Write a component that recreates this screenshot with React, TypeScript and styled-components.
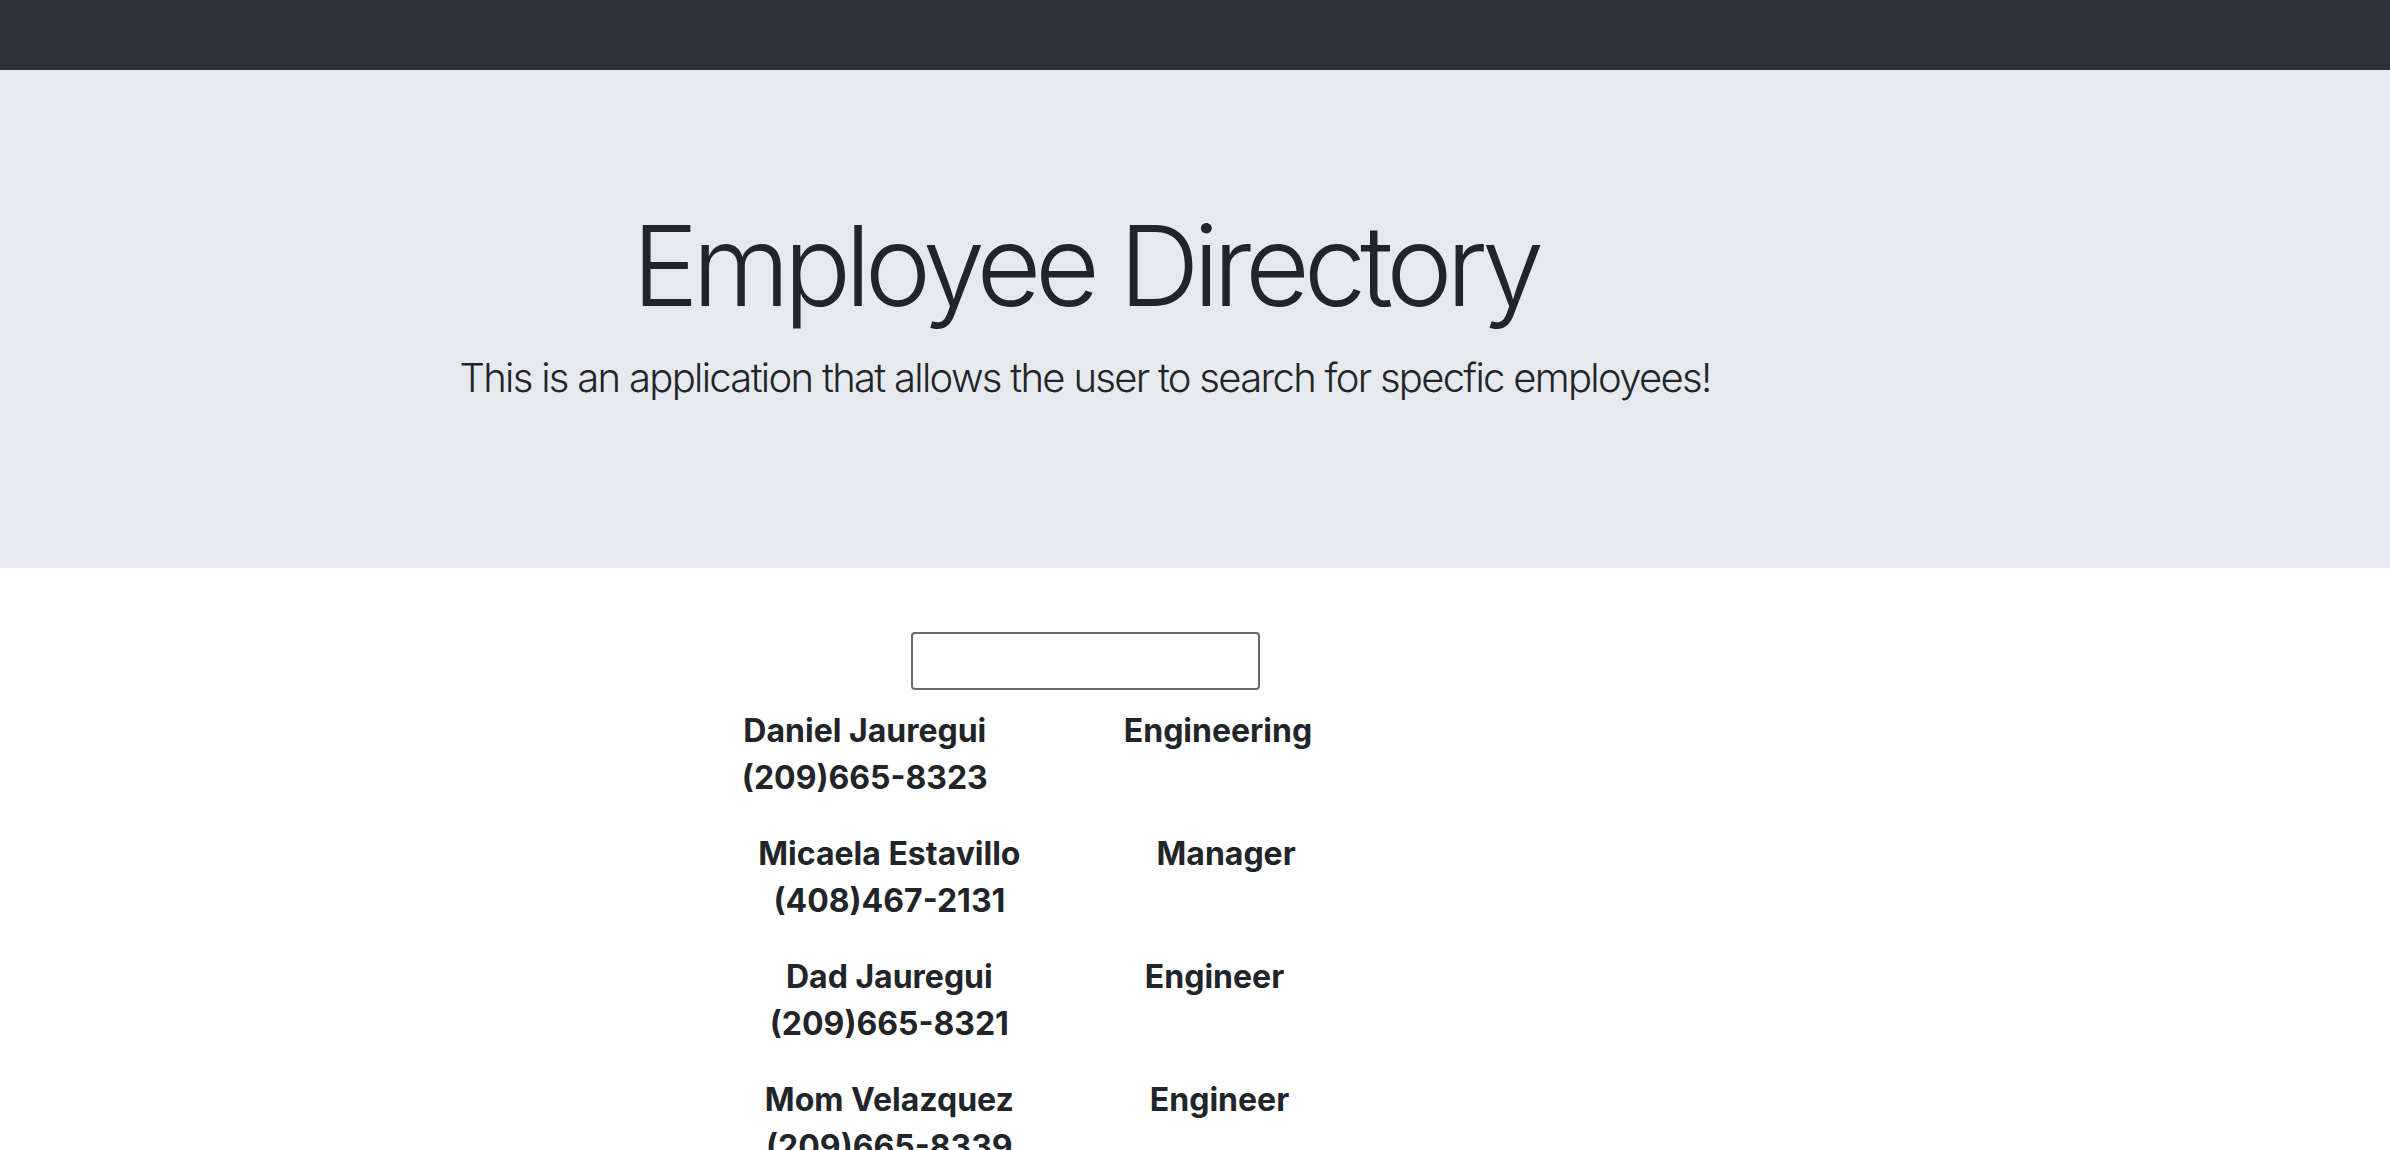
import React, { useState } from 'react';
import styled, { createGlobalStyle } from 'styled-components';

const employees = [
  { name: 'Daniel Jauregui', phone: '(209)665-8323', role: 'Engineering' },
  { name: 'Micaela Estavillo', phone: '(408)467-2131', role: 'Manager' },
  { name: 'Dad Jauregui', phone: '(209)665-8321', role: 'Engineer' },
  { name: 'Mom Velazquez', phone: '(209)665-8339', role: 'Engineer' },
];

const App = () => {
  const [search, setSearch] = useState('');

  const filtered = employees.filter((e) =>
    e.name.toLowerCase().includes(search.toLowerCase())
  );

  return (
    <>
      <GlobalStyle />
      <Navbar />
      <Jumbotron>
        <Title>Employee Directory</Title>
        <Lead>This is an application that allows the user to search for specfic employees!</Lead>
      </Jumbotron>
      <Main>
        <SearchInput value={search} onChange={(e) => setSearch(e.target.value)} />
        <List>
          {filtered.map((emp) => (
            <Row key={emp.name}>
              <Person>
                <div>{emp.name}</div>
                <div>{emp.phone}</div>
              </Person>
              <Role>{emp.role}</Role>
            </Row>
          ))}
        </List>
      </Main>
    </>
  );
};

export default App;

const GlobalStyle = createGlobalStyle`
  html, body {
    margin: 0;
    padding: 0;
    background: #ffffff;
  }
  body {
    font-family: Inter, "Liberation Sans", sans-serif;
    color: #212529;
    overflow: hidden;
  }
`;

const Navbar = styled.nav`
  height: 70px;
  background: #2f3337;
`;

const Jumbotron = styled.header`
  background: #e6e9ee;
  padding: 128px 220px 128px 0;
  margin-bottom: 64px;
  display: flex;
  flex-direction: column;
  align-items: center;
`;

const Title = styled.h1`
  margin: 0 0 16px;
  font-size: 112px;
  font-weight: 300;
  line-height: 1.2;
  letter-spacing: -6.3px;
`;

const Lead = styled.p`
  margin: 0 0 32px;
  font-size: 40px;
  font-weight: 300;
  line-height: 1.5;
  letter-spacing: -1.7px;
`;

const Main = styled.main`
  display: flex;
  flex-direction: column;
  align-items: center;
  padding-right: 220px;
`;

const SearchInput = styled.input`
  box-sizing: border-box;
  width: 349px;
  height: 58px;
  border: 2px solid #6b6b6b;
  border-radius: 4px;
  background: #fff;
  font-size: 26px;
  padding: 0 8px;
  margin-bottom: 17px;
  outline: none;
`;

const List = styled.ul`
  list-style: none;
  margin: 0;
  padding: 0 116px 0 0;
  display: flex;
  flex-direction: column;
  gap: 29px;
`;

const Row = styled.li`
  display: flex;
  justify-content: center;
  align-items: flex-start;
  gap: 136px;
  font-size: 32px;
  font-weight: 700;
  line-height: 47px;
`;

const Person = styled.div`
  text-align: center;
`;

const Role = styled.div`
  text-align: center;
`;
